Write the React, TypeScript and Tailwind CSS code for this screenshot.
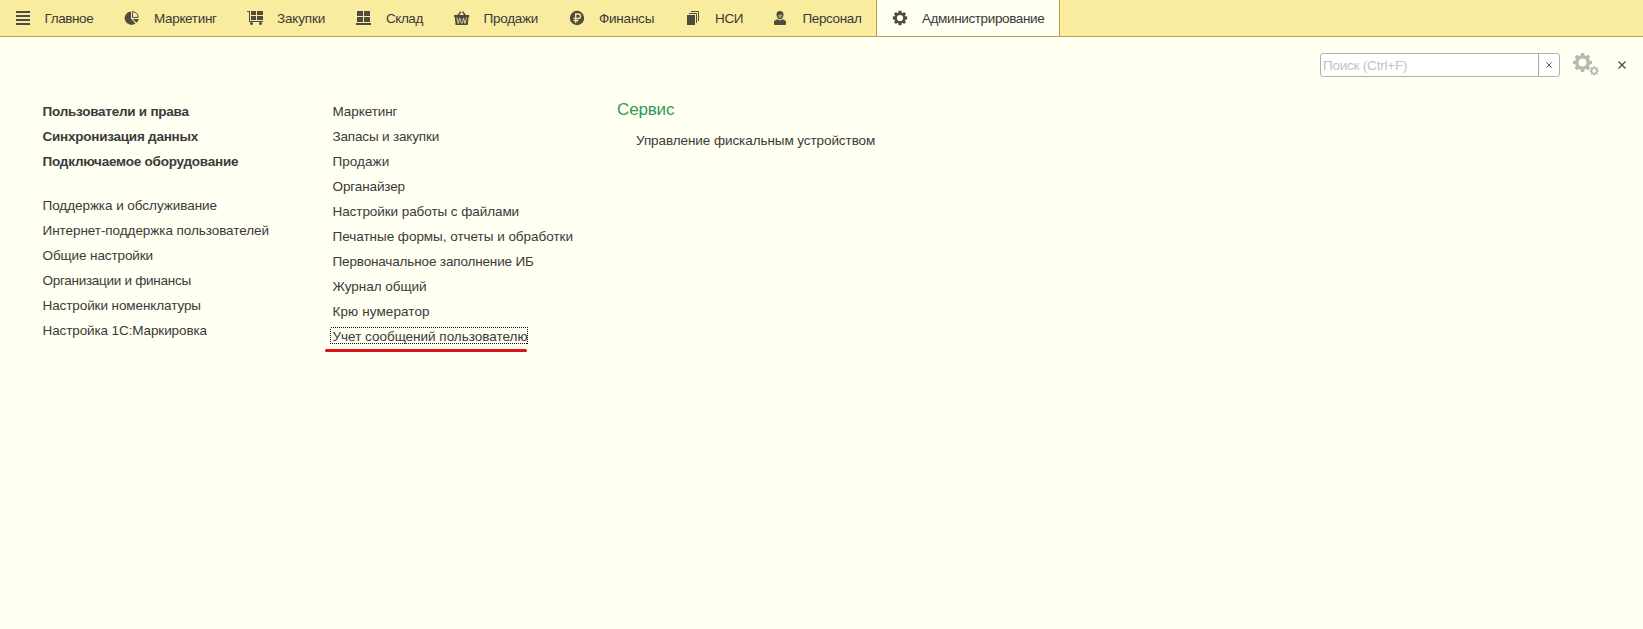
import type { ReactNode } from "react";

function gearPath(cx: number, cy: number, outer: number, inner: number, hole: number, wide: number, narrow: number, teeth = 8) {
  const pts: string[] = [];
  const step = (Math.PI * 2) / teeth;
  const at = (r: number, a: number) => `${(cx + r * Math.sin(a)).toFixed(2)} ${(cy - r * Math.cos(a)).toFixed(2)}`;
  for (let i = 0; i < teeth; i++) {
    const a = i * step;
    pts.push(at(inner, a - wide), at(outer, a - narrow), at(outer, a + narrow), at(inner, a + wide));
  }
  return `M${pts.join("L")}ZM${cx - hole} ${cy}a${hole} ${hole} 0 1 0 ${hole * 2} 0a${hole} ${hole} 0 1 0 ${-hole * 2} 0Z`;
}

function Icon({ children }: { children: ReactNode }) {
  return (
    <svg viewBox="0 0 16 16" className="h-4 w-4 shrink-0 fill-[#4f4b40]">
      {children}
    </svg>
  );
}

const icons = {
  menu: <path d="M1 1h14v2H1zM1 5h14v2H1zM1 9h14v2H1zM1 13h14v2H1z" />,
  pie: (
    <>
      <path d="M7 1.400V8.400L11.500 13.400A6.700 6.700 0 1 1 7 1.400Z" />
      <path d="M8.500 1.600A5.800 5.800 0 0 1 14.200 7.400H8.500Z" fill="none" stroke="#4f4b40" strokeWidth="1" />
      <path d="M8.700 9h6a6.300 6.300 0 0 1-2.200 3.800Z" />
    </>
  ),
  cart: (
    <>
      <path d="M0 1h3v10H16v1H2V2H0zM4 1h5v4H4zM10 1h6v4h-6zM4 6h5v4H4zM10 6h6v4h-6z" shapeRendering="crispEdges" />
      <circle cx="4.500" cy="13.500" r="1.500" />
      <circle cx="13.500" cy="13.500" r="1.500" />
    </>
  ),
  stock: <path d="M1 1h6v5H1zM8 1h6v5H8zM1 7h6v5H1zM8 7h6v5H8zM0 13h15v2H0z" shapeRendering="crispEdges" />,
  basket: (
    <>
      <path d="M3.600 6 7 1.600M11.600 6 8.600 1.600" fill="none" stroke="#4f4b40" strokeWidth="1.500" />
      <path d="M0 5h15.200v2H14.600L13.700 15H1.600L.7 7H0z" />
      <path d="m2.800 7.500 1.400 6L5.800 8l1.400 5.500M8.200 13.500 9.500 8l1.500 5.500L12.500 7.500" fill="none" stroke="#f9ec9f" strokeWidth=".8" />
    </>
  ),
  ruble: (
    <>
      <circle cx="8" cy="8" r="7.200" />
      <path d="M6.700 13V4H9.300a2.200 2.200 0 0 1 0 4.500H4.500M4.500 10.600h5" fill="none" stroke="#f9ec9f" strokeWidth="1.300" />
    </>
  ),
  copies: (
    <>
      <path d="M2 5h8v10H2z" />
      <path d="M4 3.500h7.500V13M6 1.500h7.500V11" fill="none" stroke="#4f4b40" strokeWidth="1" />
    </>
  ),
  person: (
    <>
      <path d="M2 14v-1.600C2 10.500 3.600 9.700 5.600 9.300L8 10.400l2.400-1.100c2 .4 3.600 1.200 3.600 3.100V14q0 1-1 1H3q-1 0-1-1Z" />
      <path d="M4.500 4.400C4.500 2.200 5.900 1 8 1s3.500 1.200 3.500 3.400C11.500 7 9.900 9.200 8 9.200S4.500 7 4.500 4.400Z" />
      <path d="M5.900 5.200c1.400 0 2.700-.5 3.400-1.200.2.500.5.8.8 1C10 6.600 9 8 8 8S6.100 6.700 5.900 5.200Z" fill="#a89e70" />
    </>
  ),
  gear: <path fillRule="evenodd" d={gearPath(8, 8, 7.3, 5.5, 3.1, 0.3, 0.2)} />,
};

const sections: { label: string; icon: keyof typeof icons; cell: string; text: string }[] = [
  { label: "Главное", icon: "menu", cell: "w-[109px] pl-[15px]", text: "ml-[13.500px] tracking-[-0.4px]" },
  { label: "Маркетинг", icon: "pie", cell: "w-[122px] pl-[15px]", text: "ml-[14px] tracking-[-0.34px]" },
  { label: "Закупки", icon: "cart", cell: "w-[109px] pl-[16px]", text: "ml-[14px] tracking-[-0.16px]" },
  { label: "Склад", icon: "stock", cell: "w-[98px] pl-[16px]", text: "ml-[14px] tracking-[-0.44px]" },
  { label: "Продажи", icon: "basket", cell: "w-[116px] pl-[16px]", text: "ml-[13.500px] tracking-[-0.25px]" },
  { label: "Финансы", icon: "ruble", cell: "w-[116px] pl-[15px]", text: "ml-[14px] tracking-[-0.22px]" },
  { label: "НСИ", icon: "copies", cell: "w-[87px] pl-[15px]", text: "ml-[14px] tracking-[-0.36px]" },
  { label: "Персонал", icon: "person", cell: "w-[119px] pl-[15px]", text: "ml-[14.500px] tracking-[-0.38px]" },
];

const favourites = [
  { label: "Пользователи и права", cls: "tracking-[-0.24px]" },
  { label: "Синхронизация данных", cls: "tracking-[-0.24px]" },
  { label: "Подключаемое оборудование", cls: "tracking-[-0.22px]" },
];

const general = [
  { label: "Поддержка и обслуживание", cls: "tracking-[-0.05px]" },
  { label: "Интернет-поддержка пользователей", cls: "tracking-[-0.06px]" },
  { label: "Общие настройки", cls: "tracking-[-0.1px]" },
  { label: "Организации и финансы", cls: "tracking-[-0.28px]" },
  { label: "Настройки номенклатуры", cls: "tracking-[-0.09px]" },
  { label: "Настройка 1С:Маркировка", cls: "tracking-[-0.11px]" },
];

const panels = [
  { label: "Маркетинг", cls: "tracking-[-0.08px]" },
  { label: "Запасы и закупки", cls: "tracking-[-0.17px]" },
  { label: "Продажи", cls: "tracking-[0.05px]" },
  { label: "Органайзер", cls: "tracking-[-0.12px]" },
  { label: "Настройки работы с файлами", cls: "tracking-[-0.07px]" },
  { label: "Печатные формы, отчеты и обработки", cls: "tracking-[-0.03px]" },
  { label: "Первоначальное заполнение ИБ", cls: "tracking-[-0.15px]" },
  { label: "Журнал общий", cls: "tracking-[-0.03px]" },
  { label: "Крю нумератор", cls: "tracking-[0.1px]" },
];

function Links({ items }: { items: { label: string; cls: string }[] }) {
  return (
    <>
      {items.map((item) => (
        <li key={item.label} className={`h-[25px] leading-[25px] ${item.cls}`}>
          {item.label}
        </li>
      ))}
    </>
  );
}

function Cross({ className }: { className: string }) {
  return (
    <svg viewBox="0 0 8 8" className={className} fill="none">
      <path d="m.5.5 7 7M7.500.5l-7 7" />
    </svg>
  );
}

export default function App() {
  return (
    <div className="flex h-[629px] w-[1643px] flex-col overflow-hidden bg-[#fffff2] font-['Liberation_Sans',Arial,sans-serif] text-[13.5px] whitespace-nowrap text-[#3a3a3a]">
      <nav className="flex h-[37px] shrink-0 bg-[#f9ec9f]">
        {sections.map((s) => (
          <div key={s.label} className={`flex items-center border-b border-[#b5a24e] ${s.cell}`}>
            <Icon>{icons[s.icon]}</Icon>
            <span className={`pt-px leading-[19px] ${s.text}`}>{s.label}</span>
          </div>
        ))}
        <div className="flex w-[184px] items-center border-x border-b border-[#b5a24e] bg-[#fffff2] pl-[15px]">
          <Icon>{icons.gear}</Icon>
          <span className="ml-[14px] pt-px leading-[19px] tracking-[-0.38px]">Администрирование</span>
        </div>
        <div className="flex-1 border-b border-[#b5a24e]" />
      </nav>

      <div className="flex h-[62px] shrink-0 items-start justify-end pt-4">
        <div className="flex h-6 w-[240px] rounded-[3px] border border-[#b0b0b0] bg-white">
          <span className="flex-1 pl-[2px] leading-[23px] tracking-[-0.22px] text-[#c2c2c2]">Поиск (Ctrl+F)</span>
          <button className="flex w-[21px] items-center justify-center border-l border-[#a8a8a8]">
            <Cross className="h-[6px] w-[6px] stroke-[#555] stroke-[1.3px]" />
          </button>
        </div>
        <svg viewBox="0 0 28 24" className="ml-3 h-6 w-7 fill-[#b8b8b4]" fillRule="evenodd">
          <path d={gearPath(10.5, 9.5, 9.6, 7.4, 4, 0.28, 0.17)} />
          <path d={gearPath(22.2, 17.8, 4.6, 3.5, 1.9, 0.3, 0.2)} />
        </svg>
        <Cross className="mt-2 mr-[17px] ml-[18px] h-2 w-2 stroke-[#4a4a4a] stroke-[1.3px]" />
      </div>

      <main className="flex pl-[42.500px]">
        <ul className="w-[290px]">
          <li>
            <ul className="font-bold">
              <Links items={favourites} />
            </ul>
          </li>
          <li className="mt-[19px]">
            <ul>
              <Links items={general} />
            </ul>
          </li>
        </ul>
        <ul className="w-[284.500px]">
          <Links items={panels} />
          <li className="relative mt-[3px] -ml-[2px] h-[18px] w-[198px] pl-[2px] leading-[19px] tracking-[-0.01px]">
            Учет сообщений пользователю
            <svg className="absolute top-0 left-[-0.5px] h-[18px] w-[198px]" fill="none" stroke="#111" strokeDasharray="1 1">
              <rect x=".5" y=".5" width="197" height="16" shapeRendering="crispEdges" />
            </svg>
            <span className="absolute top-[22px] -left-[5.500px] h-[3px] w-[202px] rounded-full bg-[#dd1016]" />
          </li>
        </ul>
        <section>
          <h2 className="h-[28px] text-[17px] leading-[21px] tracking-[-0.15px] text-[#2c9b54]">Сервис</h2>
          <p className="pl-[19px] leading-[27px] tracking-[-0.08px]">Управление фискальным устройством</p>
        </section>
      </main>
    </div>
  );
}
